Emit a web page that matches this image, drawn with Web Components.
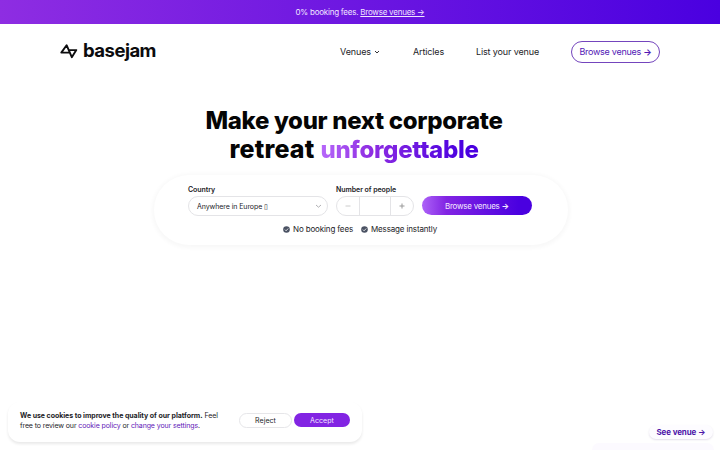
<!DOCTYPE html>
<html lang="en">
<head>
<meta charset="utf-8">
<title>basejam</title>
<style>
   body {
      margin: 0;
      height: 450px;
      overflow: hidden;
      background: #fff;
      color: #1c1c1f;
      font: 8px/12px Inter, "Liberation Sans", sans-serif;
   }
</style>
</head>
<body>

<promo-banner></promo-banner>
<site-header></site-header>
<hero-title></hero-title>
<search-card></search-card>
<bottom-dock></bottom-dock>

<script>
class BaseElement extends HTMLElement {

   constructor() {
      super()
      this.attachShadow({ mode: 'open' })
   }

   connectedCallback() {
      const template = document.createElement("template")
      template.innerHTML = this.getTemplate()
      this.shadowRoot.replaceChildren(template.content.cloneNode(true))
      this.ready()
   }

   ready() {}
}

// one line of text, tracked so that it fills the given width
class TextLine extends BaseElement {

   getTemplate() {
      return /*html*/`
         <style>
            :host { display: inline-block; white-space: nowrap; text-align: left; }
            span { display: inline-block; }
            ::slotted(i) { font-style: normal; font-weight: 700; }
         </style>
         <span><slot></slot></span>
      `
   }

   ready() {
      const width = Number(this.getAttribute("width"))
      const span = this.shadowRoot.querySelector("span")
      const count = this.textContent.length
      const natural = span.getBoundingClientRect().width
      span.style.letterSpacing = (width - natural) / count + "px"
      this.style.width = width + "px"
   }
}

class PromoBanner extends BaseElement {

   getTemplate() {
      return /*html*/`
         <style>
            :host {
               display: flex;
               justify-content: center;
               align-items: center;
               height: 24px;
               color: #f1e6ff;
               background: linear-gradient(90deg, #8e2de2, #4a00e0);
            }
            u { text-underline-offset: 1px; text-decoration-thickness: .6px; }
         </style>
         <text-line width="129">0% booking fees. <u>Browse venues →</u></text-line>
      `
   }
}

class SiteHeader extends BaseElement {

   getTemplate() {
      return /*html*/`
         <style>
            :host {
               display: flex;
               justify-content: space-between;
               align-items: center;
               height: 56px;
               padding: 0 60px;
               font-size: 9px;
            }
            .logo { display: flex; align-items: center; gap: 5px; color: #0c0c0e; }
            .logo svg { margin-top: -2px; }
            .logo text-line { font-size: 18.5px; line-height: 24px; font-weight: 700; margin-top: -4px; }
            nav { display: flex; align-items: center; }
            .venues { display: flex; align-items: center; gap: 3px; margin-right: 33px; }
            .list { margin: 0 32px; }
            .button {
               box-sizing: border-box;
               display: flex;
               justify-content: center;
               align-items: center;
               width: 89px;
               height: 22px;
               border: 1px solid #7445bd;
               border-radius: 11px;
               color: #5117b5;
            }
         </style>
         <div class="logo">
            <svg width="18" height="16" viewBox="0 0 18 16" fill="none" stroke="currentColor" stroke-width="1.9" stroke-linejoin="round">
               <path d="M9.5 9.6H1.3L6.6 2.2L11.8 14.2L16.3 7.1H8.4"/>
            </svg>
            <text-line width="73">basejam</text-line>
         </div>
         <nav>
            <div class="venues">
               <text-line width="31">Venues</text-line>
               <svg width="6" height="6" viewBox="0 0 6 6" fill="none" stroke="currentColor" stroke-width=".9"><path d="M1 2L3 4L5 2"/></svg>
            </div>
            <text-line width="31">Articles</text-line>
            <text-line class="list" width="63">List your venue</text-line>
            <div class="button"><text-line width="72">Browse venues <i>→</i></text-line></div>
         </nav>
      `
   }
}

class HeroTitle extends BaseElement {

   getTemplate() {
      return /*html*/`
         <style>
            :host { display: block; padding-top: 27px; }
            h1 {
               display: flex;
               flex-direction: column;
               align-items: center;
               width: 708px;
               margin: 0;
               color: #050505;
               font-size: 24px;
               line-height: 28px;
               font-weight: 800;
            }
            div { display: flex; align-items: baseline; gap: 6px; height: 28px; }
            .retreat { font-size: 25px; }
            .accent {
               color: transparent;
               background: linear-gradient(90deg, #b667fa, #8e2de2 32%, #4a00e0 90%);
               -webkit-background-clip: text;
               background-clip: text;
            }
         </style>
         <h1>
            <text-line width="297">Make your next corporate</text-line>
            <div>
               <text-line class="retreat" width="85">retreat</text-line>
               <text-line class="accent" width="158">unforgettable</text-line>
            </div>
         </h1>
      `
   }
}

class SearchCard extends BaseElement {

   getTemplate() {
      return /*html*/`
         <style>
            :host {
               box-sizing: border-box;
               display: block;
               width: 414px;
               height: 70px;
               margin: 12px 0 0 154px;
               padding: 9px 34px 0;
               border-radius: 35px;
               box-shadow: 0 1px 4px 2px rgba(0, 0, 0, .03);
            }
            .fields { display: flex; align-items: flex-end; gap: 8px; }
            .label { display: block; font-size: 7px; font-weight: 600; }
            .box {
               box-sizing: border-box;
               display: flex;
               align-items: center;
               height: 20px;
               border: 1px solid #e4e4e7;
               border-radius: 10px;
            }
            .select { width: 140px; padding: 0 5px 0 8px; justify-content: space-between; font-size: 7px; }
            .select text-line { padding-top: 1px; }
            .stepper { width: 78px; color: #999; }
            .stepper span { display: grid; place-items: center; width: 22px; height: 100%; }
            .stepper .value { flex: 1; border: solid #e4e4e7; border-width: 0 1px; }
            .go {
               display: flex;
               justify-content: center;
               align-items: center;
               width: 110px;
               height: 19px;
               margin-bottom: 1px;
               border-radius: 10px;
               color: #f4eaff;
               background: linear-gradient(90deg, #ad63f7, #8224e3 22%, #4a00e0 88%);
            }
            .points { display: flex; justify-content: center; gap: 8px; width: 344px; margin-top: 7px; }
            .points div { display: flex; align-items: center; gap: 3px; }
         </style>
         <div class="fields">
            <div>
               <text-line class="label" width="27">Country</text-line>
               <div class="box select">
                  <text-line width="71">Anywhere in Europe ▯</text-line>
                  <svg width="7" height="6" viewBox="0 0 7 6" fill="none" stroke="#9a9a9f" stroke-width=".8"><path d="M1 2L3.5 4.2L6 2"/></svg>
               </div>
            </div>
            <div>
               <text-line class="label" width="60">Number of people</text-line>
               <div class="box stepper">
                  <span><svg width="6" height="6" stroke="#ccc"><path d="M.5 3H5.5"/></svg></span>
                  <span class="value"></span>
                  <span><svg width="6" height="6" stroke="#999"><path d="M.5 3H5.5M3 .5V5.5"/></svg></span>
               </div>
            </div>
            <div class="go"><text-line width="64">Browse venues <i>→</i></text-line></div>
         </div>
         <div class="points">
            <div><check-icon></check-icon><text-line width="60">No booking fees</text-line></div>
            <div><check-icon></check-icon><text-line width="66">Message instantly</text-line></div>
         </div>
      `
   }
}

class CheckIcon extends BaseElement {

   getTemplate() {
      return /*html*/`
         <style>:host { display: block; height: 7px; } svg { display: block; }</style>
         <svg width="7" height="7" viewBox="0 0 7 7" fill="none">
            <circle cx="3.5" cy="3.5" r="3.3" fill="#4b5263"/>
            <path d="M1.9 3.6L3.1 4.8L5.2 2.5" stroke="#fff" stroke-width=".8"/>
         </svg>
      `
   }
}

// cookie notice and venue link stay over the page
class BottomDock extends BaseElement {

   getTemplate() {
      return /*html*/`
         <style>
            :host {
               position: absolute;
               inset: 402px 0 0 0;
               display: flex;
               justify-content: space-between;
               font-size: 7px;
               line-height: 10px;
            }
            .cookies {
               box-sizing: border-box;
               display: flex;
               justify-content: space-between;
               width: 354px;
               height: 40px;
               margin-left: 8px;
               padding: 8px 12px 0;
               border-radius: 12px;
               background: #fff;
               box-shadow: 0 2px 3px rgba(0, 0, 0, .09);
            }
            .copy { display: flex; flex-direction: column; padding-top: 1px; }
            a { color: #5f20b8; }
            .actions { display: flex; align-items: center; gap: 2px; height: 20px; }
            .reject, .accept { box-sizing: border-box; display: grid; place-items: center; border-radius: 8px; }
            .reject { width: 53px; height: 15px; padding-top: 1px; border: 1px solid #e6e6e9; }
            .accept { width: 56px; height: 14px; padding-top: 1px; color: #f3e6ff; background: #8224e3; }
            .side { display: flex; flex-direction: column; align-items: flex-end; width: 128px; padding-top: 23px; }
            .see {
               display: grid;
               place-items: center;
               width: 64px;
               height: 15px;
               margin-right: 7px;
               border-radius: 8px;
               color: #4d16a8;
               background: #fdfcff;
               font-size: 8px;
               font-weight: 700;
               box-shadow: 0 1px 2px rgba(40, 0, 90, .13);
            }
            .venue { width: 122px; height: 8px; margin: 4px 6px 0 0; border-radius: 8px 8px 0 0; background: #fcfaff; }
         </style>
         <div class="cookies">
            <div class="copy">
               <text-line width="198"><b>We use cookies to improve the quality of our platform.</b> Feel</text-line>
               <text-line width="180">free to review our <a>cookie policy</a> or <a>change your settings</a>.</text-line>
            </div>
            <div class="actions">
               <div class="reject"><text-line width="21">Reject</text-line></div>
               <div class="accept"><text-line width="24">Accept</text-line></div>
            </div>
         </div>
         <div class="side">
            <div class="see"><text-line width="49">See venue →</text-line></div>
            <div class="venue"></div>
         </div>
      `
   }
}

customElements.define("text-line", TextLine)
customElements.define("check-icon", CheckIcon)
customElements.define("promo-banner", PromoBanner)
customElements.define("site-header", SiteHeader)
customElements.define("hero-title", HeroTitle)
customElements.define("search-card", SearchCard)
customElements.define("bottom-dock", BottomDock)
</script>
</body>
</html>
